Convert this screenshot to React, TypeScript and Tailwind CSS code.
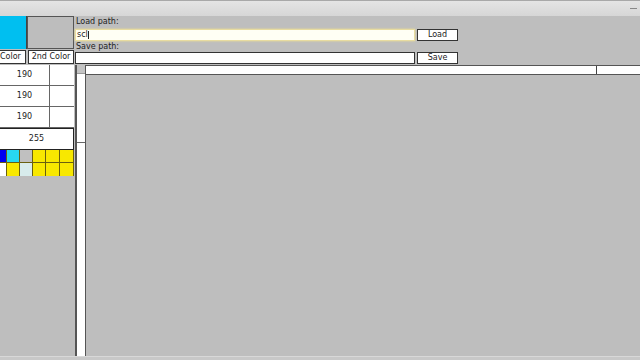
export default function App() {
  const row1 = ["#0000f0", "#28d8f0", "#c0c0c0", "#f8e800", "#f8e800", "#f8e800"];
  const row2 = ["#ffffff", "#f8e800", "#d8ecec", "#f8e800", "#f8e800", "#f8e800"];
  const widths = ["w-[7px]", "w-[13px]", "w-[13px]", "w-[13px]", "w-[14px]", "w-[14px]"];

  return (
    <div
      className="w-[640px] h-[360px] overflow-hidden bg-[#bebebe] flex flex-col text-[#222]"
      style={{ fontFamily: '"DejaVu Sans", "Liberation Sans", sans-serif' }}
    >
      {/* Title bar */}
      <div className="h-[16px] shrink-0 border-t border-[#a8a8a8] bg-gradient-to-b from-[#e4e4e4] to-[#d6d6d6] flex items-center justify-end pr-[3px]">
        <div className="w-[7px] h-[1px] bg-[#888]" />
      </div>

      <div className="flex flex-1 min-h-0">
        {/* Left colour panel */}
        <div className="w-[74px] shrink-0 flex flex-col">
          <div className="h-[33px] flex">
            <div className="w-[27px] bg-[#00bff0] border-r border-[#444]" />
            <div className="flex-1 bg-[#bdbdbd] border border-[#555]" />
          </div>
          <div className="h-[16px] flex gap-[2px] items-stretch py-[1px]">
            <div className="w-[26px] bg-white border border-[#333] border-l-0 text-[8px] leading-none flex items-center overflow-hidden whitespace-nowrap">
              Color
            </div>
            <div className="flex-1 bg-white border border-[#333] text-[8px] leading-none flex items-center justify-center whitespace-nowrap">
              2nd Color
            </div>
          </div>
          {["190", "190", "190"].map((v, i) => (
            <div key={i} className="h-[21px] flex border-b border-[#666]">
              <div className="w-[50px] bg-white border-r border-[#666] text-[8px] flex items-center justify-center">
                {v}
              </div>
              <div className="flex-1 bg-white" />
            </div>
          ))}
          <div className="h-[22px] bg-white border border-l-0 border-[#222] text-[8px] flex items-center justify-center">
            255
          </div>
          <div className="flex h-[13px] bg-[#8a7a10]">
            {row1.map((c, i) => (
              <div key={i} className={`${widths[i]} border-r border-b border-[#6a6010]`} style={{ background: c }} />
            ))}
          </div>
          <div className="flex h-[13px] bg-[#8a7a10]">
            {row2.map((c, i) => (
              <div key={i} className={`${widths[i]} border-r border-[#6a6010]`} style={{ background: c }} />
            ))}
          </div>
        </div>

        {/* Right side */}
        <div className="flex-1 flex flex-col pl-[1px] min-w-0">
          <div className="h-[13px] text-[8px] leading-[11px] pl-[1px]">Load path:</div>
          <div className="h-[12px] flex gap-[2px]">
            <div className="w-[340px] bg-[#fffff4] border border-[#e8dca0] shadow-[0_0_2px_#f0e090] text-[8px] leading-[10px] pl-[1px] flex items-center">
              scl<span className="w-[1px] h-[8px] bg-[#222]" />
            </div>
            <div className="w-[41px] bg-white border border-[#333] text-[8px] flex items-center justify-center">
              Load
            </div>
          </div>
          <div className="h-[11px] text-[8px] leading-[11px] pl-[1px]">Save path:</div>
          <div className="h-[12px] flex gap-[2px]">
            <div className="w-[340px] bg-white border border-[#333]" />
            <div className="w-[41px] bg-white border border-[#333] text-[8px] flex items-center justify-center">
              Save
            </div>
          </div>

          <div className="flex-1 flex mt-[1px] min-h-0">
            {/* vertical scrollbar */}
            <div className="w-[11px] shrink-0 bg-white border-l-2 border-r border-[#555] flex flex-col">
              <div className="h-[9px] bg-[#c4c4c4] border-b border-[#999]" />
              <div className="h-[69px] border-b border-[#666]" />
            </div>
            <div className="flex-1 flex flex-col">
              <div className="h-[10px] shrink-0 bg-white border-t border-b border-[#555] flex">
                <div className="w-[511px] border-r border-[#444]" />
              </div>
              <div className="flex-1 bg-[#bebebe]" />
            </div>
          </div>
        </div>
      </div>

      <div className="h-[4px] shrink-0 border-t border-[#d8d8d8] bg-[#c8c8c8]" />
    </div>
  );
}
